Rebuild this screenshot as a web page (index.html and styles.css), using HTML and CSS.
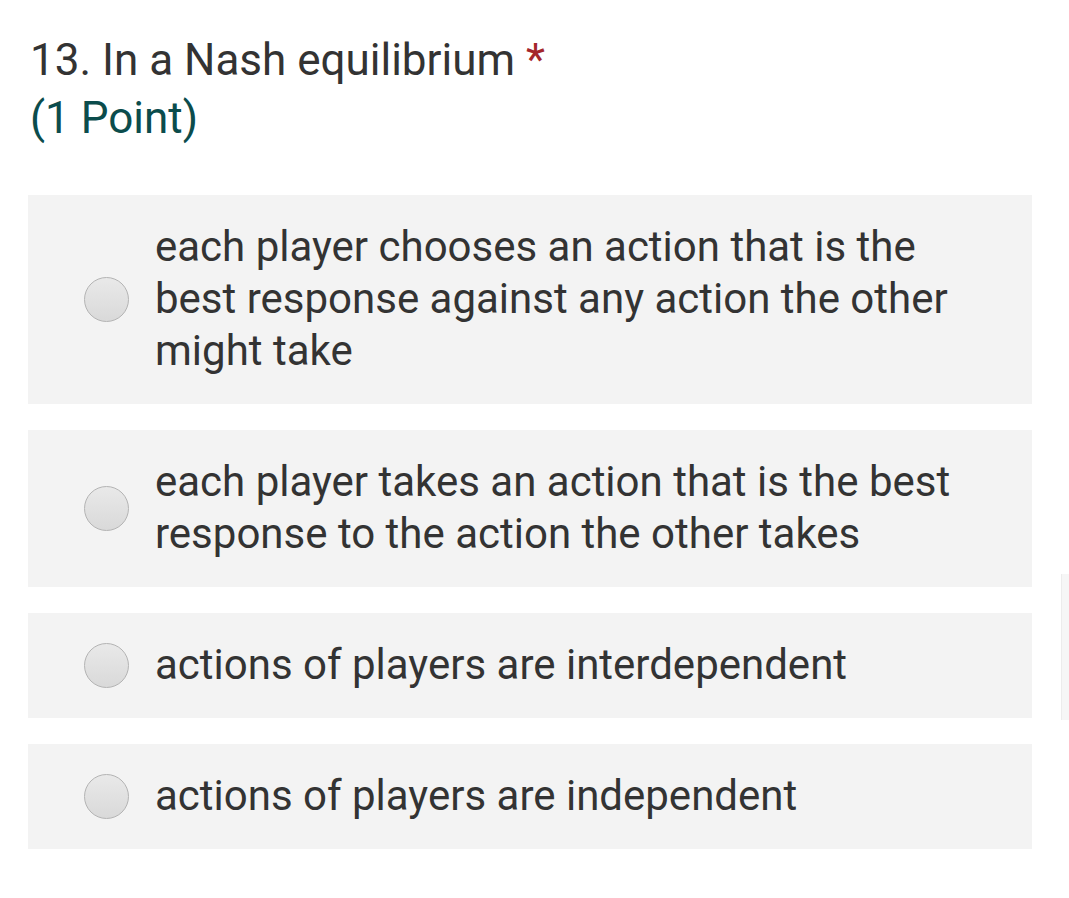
FILE: index.html
```html
<!DOCTYPE html>
<html>
<head>
<meta charset="utf-8">
<link rel="stylesheet" href="styles.css">
</head>
<body>
<div class="page">
  <div class="question">
    <div class="title">13. In a Nash equilibrium <span class="req">*</span></div>
    <div class="points">(1 Point)</div>
  </div>
  <div class="options">
    <label class="option"><span class="radio"></span><span class="text">each player chooses an action that is the best response against any action the other might take</span></label>
    <label class="option"><span class="radio"></span><span class="text">each player takes an action that is the best response to the action the other takes</span></label>
    <label class="option"><span class="radio"></span><span class="text">actions of players are interdependent</span></label>
    <label class="option"><span class="radio"></span><span class="text">actions of players are independent</span></label>
  </div>
  <div class="scroll"></div>
</div>
</body>
</html>
```
FILE: styles.css
```css
html, body {
  margin: 0;
  padding: 0;
  background: #ffffff;
}
.page {
  position: relative;
  width: 1069px;
  height: 898px;
  font-family: Roboto, "Noto Sans", sans-serif;
  color: #333333;
}
.question {
  padding: 31px 0 0 30px;
  font-size: 44px;
  line-height: 58px;
}
.req {
  color: #a4262c;
}
.points {
  color: #0b4c4c;
}
.options {
  display: flex;
  flex-direction: column;
  gap: 26px;
  margin: 48px 37px 0 28px;
}
.option {
  display: flex;
  align-items: center;
  background: #f3f3f3;
  padding: 26px 50px 27px 56px;
}
.radio {
  flex: none;
  width: 43px;
  height: 43px;
  border-radius: 50%;
  border: 1px solid #b3b3b3;
  background: linear-gradient(#e9e9e9, #d9d9d9);
  margin-right: 26px;
}
.text {
  font-size: 42px;
  line-height: 52px;
  color: #333333;
}
.scroll {
  position: absolute;
  left: 1061px;
  top: 574px;
  width: 8px;
  height: 146px;
  background: #f6f6f6;
  border-left: 1px solid #ececec;
  box-sizing: border-box;
}
```
